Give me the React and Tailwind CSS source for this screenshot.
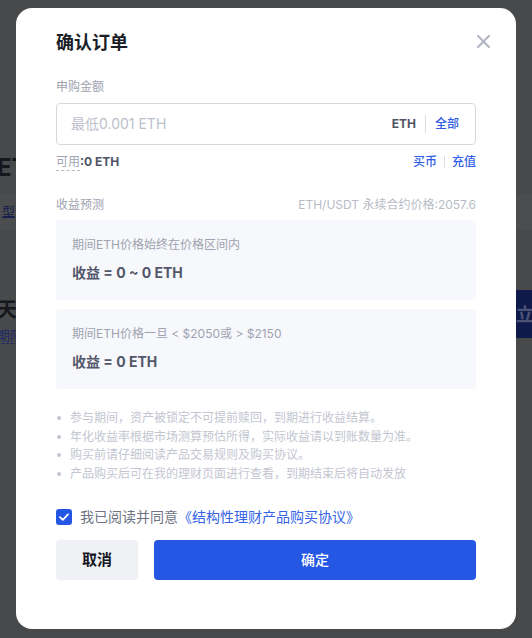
import React, { useState } from 'react';

const notes = [
  '参与期间，资产被锁定不可提前赎回，到期进行收益结算。',
  '年化收益率根据市场测算预估所得，实际收益请以到账数量为准。',
  '购买前请仔细阅读产品交易规则及购买协议。',
  '产品购买后可在我的理财页面进行查看，到期结束后将自动发放',
];

const App = () => {
  const [agree, setAgree] = useState(true);

  return (
    <div className="relative w-full h-[638px] overflow-hidden bg-[#48494b] font-['Inter','Noto_Sans_CJK_SC',sans-serif]">
      {/* page behind the mask */}
      <div className="flex flex-col">
        <div className="mt-[152px] -ml-[3px] text-[24px] font-bold leading-[32px] text-[#15171c]">ETH</div>
        <div className="mt-[10px] h-[36px] bg-[#4c4d4f] flex items-center">
          <span className="ml-[2px] text-[13px] text-[#17204a] underline">型</span>
        </div>
        <div className="mt-[66px] flex items-start justify-between">
          <div className="flex flex-col -ml-[3px]">
            <span className="text-[20px] font-bold leading-[28px] text-[#15171c]">天</span>
            <span className="mt-[3px] text-[13px] leading-[16px] text-[#1c2a66] border-b border-dashed border-[#1c2a66] w-fit">期限</span>
          </div>
          <div className="-mt-[6px] w-[16px] h-[48px] bg-[#0f1a4b] flex items-center overflow-hidden">
            <span className="text-[18px] font-bold text-[#4c5274] whitespace-nowrap">立即</span>
          </div>
        </div>
      </div>

      {/* dialog */}
      <div className="absolute left-4 top-2 w-[500px] h-[621px] bg-white rounded-2xl px-10 pt-[21px] flex flex-col">
        <div className="flex items-center justify-between">
          <h2 className="text-lg leading-7 font-bold text-[#1b1e27]">确认订单</h2>
          <svg width="13" height="13" viewBox="0 0 12 12" className="mr-[-14px] mt-[-4px]">
            <path d="M1 1L11 11M11 1L1 11" stroke="#b3b6c3" strokeWidth="2" strokeLinecap="round" />
          </svg>
        </div>

        <div className="mt-5 text-xs leading-5 text-[#9ea2af]">申购金额</div>
        <div className="mt-[6px] h-[42px] border border-[#d6d8df] rounded flex items-center pl-[14px] pr-4">
          <span className="flex-1 text-sm text-[#bcc0cb]">最低0.001 ETH</span>
          <span className="text-xs font-bold text-[#4f5465]">ETH</span>
          <span className="mx-[9px] w-px h-[18px] bg-[#dcdee4]"></span>
          <span className="text-xs font-medium text-[#2f5de6]">全部</span>
        </div>

        <div className="mt-[7px] flex items-center justify-between text-xs leading-5">
          <div className="flex items-center">
            <span className="text-[#a0a4b1] border-b border-dashed border-[#b9bcc6] leading-4">可用</span>
            <span className="font-bold text-[#4f5465]">:0 ETH</span>
          </div>
          <div className="flex items-center text-[#2f5de6] font-medium">
            <span>买币</span>
            <span className="mx-[7px] w-px h-[12px] bg-[#dcdee4]"></span>
            <span>充值</span>
          </div>
        </div>

        <div className="mt-[23px] flex items-center justify-between text-xs leading-5">
          <span className="text-[#9ea2af]">收益预测</span>
          <span className="text-[#b9bcc7]">ETH/USDT 永续合约价格:2057.6</span>
        </div>

        <div className="mt-[5px] flex flex-col gap-[9px]">
          <div className="h-[80px] rounded bg-[#f7f8fc] px-4 pt-[15px]">
            <div className="text-xs leading-5 text-[#9ea2af]">期间ETH价格始终在价格区间内</div>
            <div className="mt-2 text-sm leading-5 font-bold text-[#525769]">收益 = 0 ~ 0 ETH</div>
          </div>
          <div className="h-[80px] rounded bg-[#f7f8fc] px-4 pt-[15px]">
            <div className="text-xs leading-5 text-[#9ea2af]">期间ETH价格一旦 &lt; $2050或 &gt; $2150</div>
            <div className="mt-2 text-sm leading-5 font-bold text-[#525769]">收益 = 0 ETH</div>
          </div>
        </div>

        <ul className="mt-5 flex flex-col">
          {notes.map((n) => (
            <li key={n} className="flex items-center text-xs leading-[18.6px] text-[#c3c6d1]">
              <span className="w-[4px] h-[4px] rounded-full bg-[#c3c6d1] ml-[1px] mr-[9px]"></span>
              {n}
            </li>
          ))}
        </ul>

        <div className="mt-6 flex items-center text-sm leading-5">
          <button
            onClick={() => setAgree((p) => !p)}
            className={`w-4 h-4 rounded-[3px] flex items-center justify-center ${agree ? 'bg-[#2455e3]' : 'border border-[#c3c6d1]'}`}
          >
            {agree && (
              <svg width="10" height="8" viewBox="0 0 10 8">
                <path d="M1 4.2L3.8 6.8L9 1.4" fill="none" stroke="white" strokeWidth="1.8" strokeLinecap="round" strokeLinejoin="round" />
              </svg>
            )}
          </button>
          <span className="ml-2 text-[#6f7483]">我已阅读并同意</span>
          <span className="text-[#3463e8]">《结构性理财产品购买协议》</span>
        </div>

        <div className="mt-[13px] flex gap-4">
          <button className="w-[82px] h-10 rounded bg-[#f0f1f5] text-[15px] font-bold text-[#16181f]">取消</button>
          <button className="flex-1 h-10 rounded bg-[#2557e5] text-sm font-medium text-white">确定</button>
        </div>
      </div>
    </div>
  );
};

export default App;
